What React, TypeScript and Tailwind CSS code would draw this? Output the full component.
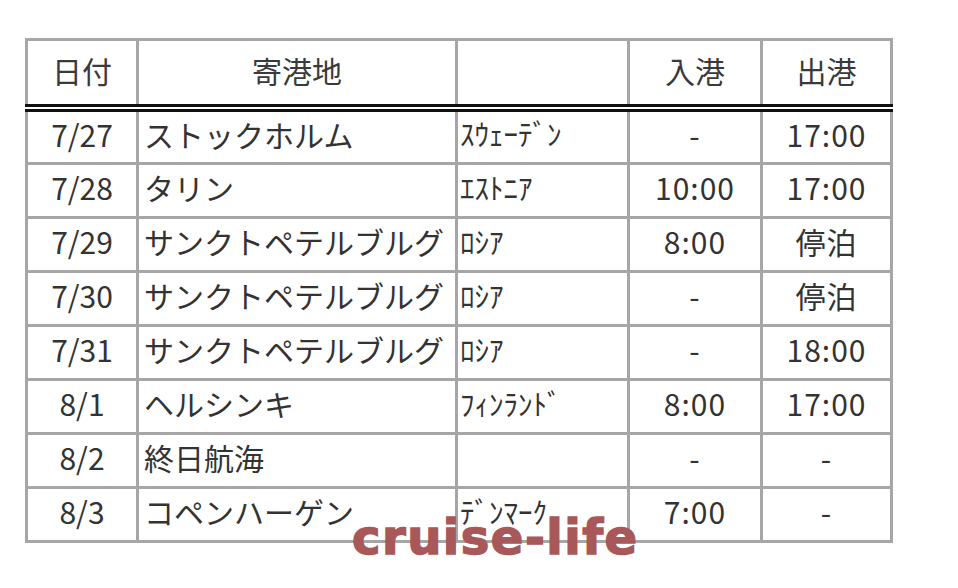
import React from "react";

type Row = { d: string; port: string; country: string; arr: string; dep: string };

const rows: Row[] = [
  { d: "7/27", port: "ストックホルム", country: "ｽｳｪｰﾃﾞﾝ", arr: "-", dep: "17:00" },
  { d: "7/28", port: "タリン", country: "ｴｽﾄﾆｱ", arr: "10:00", dep: "17:00" },
  { d: "7/29", port: "サンクトペテルブルグ", country: "ﾛｼｱ", arr: "8:00", dep: "停泊" },
  { d: "7/30", port: "サンクトペテルブルグ", country: "ﾛｼｱ", arr: "-", dep: "停泊" },
  { d: "7/31", port: "サンクトペテルブルグ", country: "ﾛｼｱ", arr: "-", dep: "18:00" },
  { d: "8/1", port: "ヘルシンキ", country: "ﾌｨﾝﾗﾝﾄﾞ", arr: "8:00", dep: "17:00" },
  { d: "8/2", port: "終日航海", country: "", arr: "-", dep: "-" },
  { d: "8/3", port: "コペンハーゲン", country: "ﾃﾞﾝﾏｰｸ", arr: "7:00", dep: "-" },
];

const cols = "grid grid-cols-[108px_316px_169px_130px_127px] gap-x-[3px]";

export default function App() {
  return (
    <div
      className="relative w-[958px] h-[588px] bg-white pl-[25px] pt-[38px] text-[#333333] text-[30px]"
      style={{ fontFamily: '"Noto Sans CJK JP", "Noto Sans", sans-serif' }}
    >
      <div className="w-[868px] flex flex-col">
        {/* header */}
        <div className={`${cols} bg-[#a6a6a6] px-[3px] pt-[3px]`}>
          <div className="bg-white h-[63px] flex items-center justify-center pb-[4px] text-[#3a3a3a]">日付</div>
          <div className="bg-white h-[63px] flex items-center justify-center pb-[4px] text-[#3a3a3a]">寄港地</div>
          <div className="bg-white h-[63px]"></div>
          <div className="bg-white h-[63px] flex items-center justify-center pb-[4px] text-[#3a3a3a]">入港</div>
          <div className="bg-white h-[63px] flex items-center justify-center pb-[4px] text-[#3a3a3a]">出港</div>
        </div>
        {/* double line */}
        <div className="h-[8px] border-y-[3px] border-[#111111] bg-white"></div>
        {/* body */}
        <div className={`${cols} gap-y-[3px] bg-[#a6a6a6] px-[3px] pb-[3px]`}>
          {rows.map((r, i) => {
            const h = i === 0 ? "h-[50px]" : "h-[51px]";
            return (
              <React.Fragment key={i}>
                <div className={`bg-white ${h} flex items-center justify-center pb-[6px]`}>{r.d}</div>
                <div className={`bg-white ${h} flex items-center pl-[5px] pb-[6px] whitespace-nowrap`}>{r.port}</div>
                <div className={`bg-white ${h} flex items-center pl-[2px] pb-[6px] whitespace-nowrap text-[29px]`}>{r.country}</div>
                <div className={`bg-white ${h} flex items-center justify-center pb-[6px] tracking-[1px]`}>{r.arr}</div>
                <div className={`bg-white ${h} flex items-center justify-center pb-[6px] tracking-[1px]`}>{r.dep}</div>
              </React.Fragment>
            );
          })}
        </div>
      </div>
      <div
        className="absolute left-[352px] top-[513px] text-[48px] leading-none font-bold text-[#a85858] tracking-[1.5px] whitespace-nowrap [-webkit-text-stroke:1.5px_#a85858]"
        style={{ fontFamily: '"DejaVu Sans", sans-serif' }}
      >
        cruise-life
      </div>
    </div>
  );
}
